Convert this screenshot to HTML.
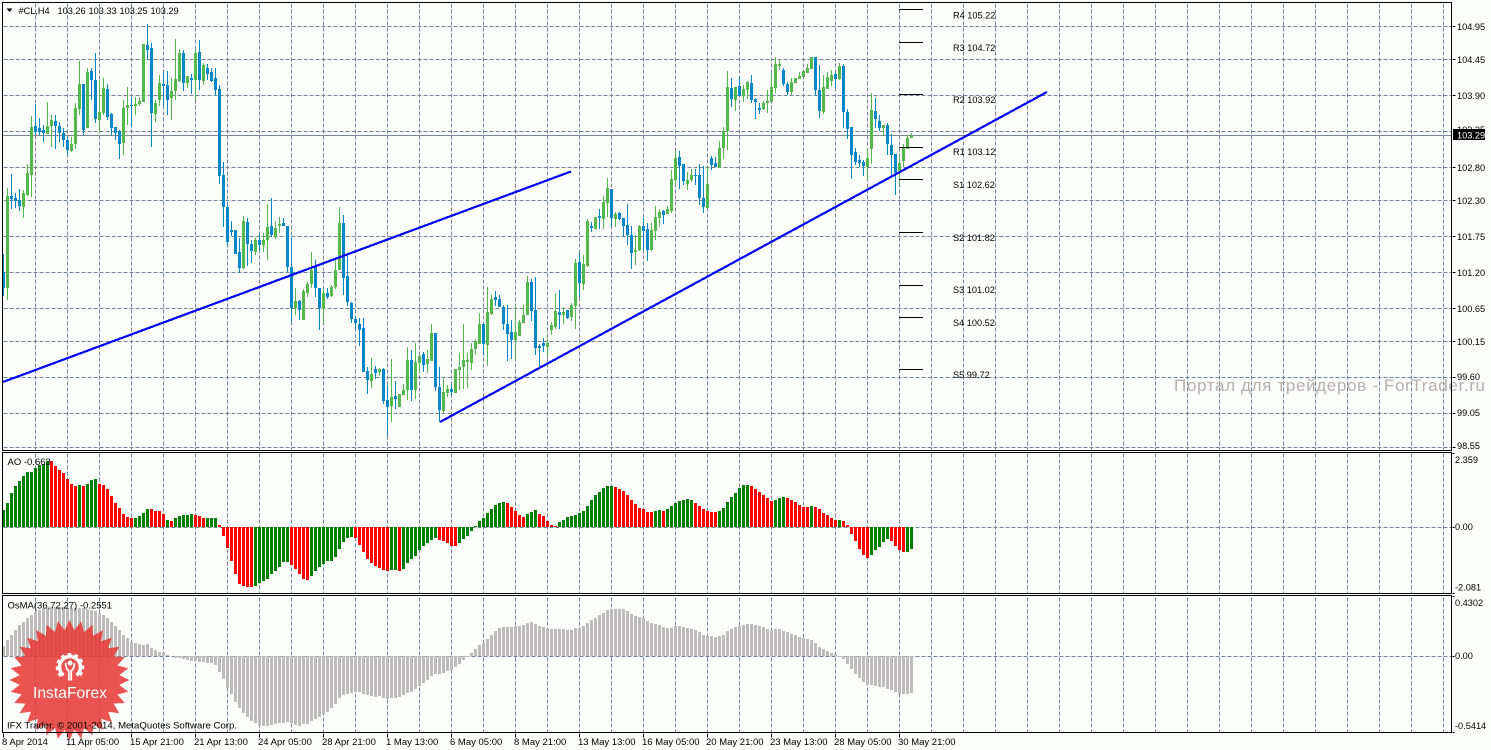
<!DOCTYPE html>
<html lang="en">
<head>
<meta charset="utf-8">
<title>#CL,H4</title>
<style>
html,body{margin:0;padding:0;background:#fcfefc;width:1491px;height:750px;overflow:hidden}
svg{display:block;position:absolute;left:0;top:0}
text{font-family:"Liberation Sans",Arial,sans-serif;font-size:9.5px;fill:#000}
.p text{font-size:9.2px}
</style>
</head>
<body>
<svg width="1491" height="750" viewBox="0 0 1491 750" xmlns="http://www.w3.org/2000/svg">
<rect width="1491" height="750" fill="#fcfefc"/>

<!-- grid -->
<g transform="translate(.5,.5)" shape-rendering="crispEdges" fill="none" stroke="#718399" stroke-width="1" stroke-dasharray="4 2">
<path d="M35 3V732M67 3V732M99 3V732M131 3V732M163 3V732M195 3V732M227 3V732M259 3V732M291 3V732M323 3V732M355 3V732M387 3V732M419 3V732M451 3V732M483 3V732M515 3V732M547 3V732M579 3V732M611 3V732M643 3V732M675 3V732M707 3V732M739 3V732M771 3V732M803 3V732M835 3V732M867 3V732M899 3V732M931 3V732M963 3V732M995 3V732M1027 3V732M1059 3V732M1091 3V732M1123 3V732M1155 3V732M1187 3V732M1219 3V732M1251 3V732M1283 3V732M1315 3V732M1347 3V732M1379 3V732M1411 3V732M1443 3V732"/>
<path d="M3 26H1451M3 59H1451M3 95H1451M3 131H1451M3 167H1451M3 200H1451M3 236H1451M3 272H1451M3 308H1451M3 341H1451M3 377H1451M3 413H1451M3 447H1451M3 527H1451M3 656H1451"/>
</g>
<rect x="0" y="451" width="1451" height="1" fill="#fcfefc"/>
<rect x="0" y="594" width="1451" height="1" fill="#fcfefc"/>
<!-- bid line -->
<rect x="3" y="135" width="1448" height="1" fill="#778899"/>

<!-- candles -->
<g transform="translate(.5,0)" shape-rendering="crispEdges" fill="none">
<path stroke="#0387c9" stroke-width="1" d="M3 254V296M11 174V209M15 193V208M19 189V211M35 104V135M39 118V135M43 125V142M55 115V149M59 122V142M63 128V147M67 136V155M83 84V135M91 68V100M95 53V123M107 84V120M111 113V135M115 127V140M119 130V159M131 97V127M147 24V60M151 43V147M163 72V106M167 71V115M183 50V91M191 74V94M199 40V90M207 64V80M211 68V82M215 68V95M219 85V184M223 162V227M227 205V245M231 221V236M235 230V254M239 238V273M247 218V266M251 240V263M259 235V250M271 198V237M283 218V226M287 226V272M291 237V322M299 300V320M315 260V297M319 288V330M327 288V299M343 215V295M347 254V306M351 302V323M355 317V330M359 318V346M363 318V372M367 367V394M375 366V379M383 368V404M387 386V436M395 381V409M411 350V401M423 352V372M435 333V391M439 367V422M451 385V396M483 324V355M495 291V306M499 295V307M503 305V330M507 305V361M511 320V359M531 279V321M535 277V355M539 344V367M543 338V352M559 290V329M567 310V319M579 252V297M591 222V232M599 209V229M611 189V227M619 212V220M623 218V237M627 204V245M631 226V269M643 218V250M647 223V261M663 210V224M679 151V189M683 164V185M695 169V185M699 164V205M703 166V213M711 156V170M715 157V167M731 78V107M739 77V96M751 75V103M755 98V119M759 103V114M783 68V86M787 82V95M815 57V95M819 65V118M835 73V88M843 64V128M847 109V139M851 127V179M855 148V165M859 155V167M863 160V176M875 98V128M879 115V131M887 123V155M891 134V176M895 154V195"/>
<path stroke="#0387c9" stroke-width="3" d="M3 272V288M11 196V199M15 198V201M19 200V206M35 126V132M39 128V132M43 130V133M55 121V126M59 126V133M63 133V140M67 140V150M83 84V130M91 71V80M95 80V119M107 89V117M111 114V128M115 127V133M119 131V144M131 105V106M147 45V50M151 48V113M163 84V86M167 85V100M183 53V83M191 78V80M199 52V80M207 68V74M211 72V81M215 78V90M219 89V176M223 175V207M227 207V242M231 230V232M235 230V254M239 252V268M247 222V244M251 244V251M259 240V245M271 226V235M283 223V226M287 226V267M291 267V308M299 301V310M315 267V288M319 288V308M327 293V297M343 223V278M347 276V302M351 303V319M355 319V323M359 324V330M363 328V372M367 371V380M375 369V373M383 369V401M387 400V407M395 396V399M411 360V390M423 354V365M435 333V387M439 387V410M451 389V392M483 324V344M495 297V300M499 299V307M503 307V324M507 324V334M511 332V340M531 282V311M535 310V348M539 346V348M543 343V346M559 312V315M567 310V318M579 262V283M591 226V228M599 216V218M611 189V218M619 213V219M623 218V226M627 225V235M631 235V253M643 226V231M647 229V250M663 211V215M679 157V166M683 164V181M695 175V176M699 175V198M703 198V207M711 158V165M715 163V167M731 88V99M739 86V96M751 83V100M755 99V102M759 108V110M783 70V84M787 84V92M815 57V90M819 90V111M835 74V79M843 66V112M847 112V129M851 127V155M855 152V162M859 160V163M863 162V166M875 111V119M879 121V128M887 125V144M891 145V155M895 154V173"/>
<path stroke="#55b84c" stroke-width="1" d="M7 188V300M23 190V218M27 164V196M31 116V197M47 102V134M51 115V147M71 137V152M75 103V149M79 61V115M87 68V128M99 80V133M103 78V115M123 100V155M127 87V125M135 97V115M139 97V106M143 44V102M155 100V122M159 75V106M171 78V120M175 39V100M179 49V82M187 76V88M195 49V100M203 63V85M243 216V269M255 238V255M263 233V252M267 204V260M275 221V239M279 217V233M295 288V315M303 289V320M307 282V297M311 252V288M323 289V323M331 285V297M335 260V289M339 207V270M371 358V388M379 368V376M391 359V422M399 394V407M403 384V395M407 347V400M415 343V399M419 354V371M427 350V373M431 324V361M443 377V413M447 385V397M455 369V393M459 353V390M463 324V389M467 353V388M471 343V370M475 339V355M479 313V344M487 287V366M491 295V315M515 305V359M519 320V336M523 305V323M527 276V315M547 338V357M551 322V335M555 293V329M563 307V324M571 303V321M575 259V329M583 255V290M587 219V267M595 217V229M603 196V229M607 178V217M615 212V227M635 235V265M639 225V251M651 223V251M655 206V240M659 209V227M667 206V214M671 170V213M675 150V185M687 172V190M691 169V182M707 167V208M719 141V168M723 127V159M727 71V150M735 87V111M743 85V102M747 81V99M763 101V110M767 90V113M771 74V102M775 57V93M779 60V70M791 78V95M795 78V83M799 72V79M803 70V77M807 64V73M811 57V69M823 75V114M827 72V89M831 70V86M839 63V80M867 148V181M871 93V164M883 125V135M899 158V185M903 144V167M907 135V149M911 133V138"/>
<path stroke="#55b84c" stroke-width="3" d="M7 196V288M23 193V207M27 173V195M31 127V175M47 126V134M51 120V126M71 144V151M75 108V144M79 84V109M87 72V128M99 112V120M103 88V113M123 108V143M127 105V108M135 104V106M139 101V104M143 44V102M155 103V114M159 83V100M171 91V98M175 79V91M179 53V81M187 76V83M195 53V80M203 65V81M243 221V268M255 240V252M263 240V245M267 227V240M275 228V237M279 224V226M295 301V308M303 291V320M307 284V293M311 270V284M323 293V309M331 287V296M335 270V287M339 223V270M371 374V381M379 369V372M391 397V406M399 394V407M403 390V395M407 360V390M415 362V390M419 356V363M427 359V364M431 333V361M443 392V411M447 389V393M455 369V393M459 367V370M463 360V367M467 360V362M471 349V363M475 341V349M479 324V344M487 312V345M491 299V314M515 332V340M519 322V336M523 315V323M527 282V315M547 343V347M551 325V330M555 311V327M563 312V315M571 305V317M575 263V306M583 264V284M587 221V266M595 217V229M603 202V219M607 188V203M615 214V219M635 250V252M639 226V250M651 230V250M655 217V231M659 212V218M667 209V214M671 179V211M675 158V180M687 180V184M691 175V180M707 184V208M719 148V168M723 131V148M727 87V131M735 87V100M743 89V96M747 82V90M763 103V109M767 101V103M771 87V102M775 64V88M779 64V66M791 82V92M795 78V83M799 76V79M803 71V77M807 68V73M811 57V69M823 87V112M827 77V89M831 75V81M839 66V79M867 158V167M871 110V149M883 125V128M899 163V171M903 148V161M907 138V149M911 136V138"/>
</g>

<!-- trend lines -->
<g shape-rendering="crispEdges" stroke="#0000ff" stroke-width="2.2" fill="none">
<path d="M3 382L571 171.500"/>
<path d="M440 422L1047 92"/>
</g>

<!-- pivots -->
<path shape-rendering="crispEdges" stroke="#000" stroke-width="1" fill="none" transform="translate(0,.5)" d="M899 9H923M899 42H923M899 94H923M899 147H923M899 179H923M899 232H923M899 285H923M899 317H923M899 369H923"/>
<g class="p">
<text x="953" y="18.500">R4 105.22</text>
<text x="953" y="51">R3 104.72</text>
<text x="953" y="103">R2 103.92</text>
<text x="953" y="155">R1 103.12</text>
<text x="953" y="188">S1 102.62</text>
<text x="953" y="241">S2 101.82</text>
<text x="953" y="293">S3 101.02</text>
<text x="953" y="326">S4 100.52</text>
<text x="953" y="378">S5 99.72</text>
</g>

<!-- watermark -->
<text x="1174" y="391" textLength="311" lengthAdjust="spacing" style="font-size:17px;fill:#b7aeab">Портал для трейдеров - ForTrader.ru</text>

<!-- AO -->
<g transform="translate(.5,0)" shape-rendering="crispEdges" fill="none" stroke-width="3">
<path stroke="#008000" d="M3 510V527M7 503V527M11 493V527M15 486V527M19 481V527M23 476V527M27 472V527M31 472V527M35 468V527M39 465V527M43 464V527M47 461V527M79 485V527M87 484V527M91 480V527M95 479V527M135 518V527M139 516V527M143 513V527M147 509V527M167 520V527M175 518V527M179 516V527M183 515V527M187 515V527M191 514V527M207 518V527M211 518V527M215 518V527M255 527V586M259 527V583M263 527V581M267 527V579M271 527V574M275 527V571M279 527V567M283 527V562M287 527V562M311 527V576M315 527V571M319 527V567M323 527V564M327 527V561M331 527V561M335 527V557M339 527V549M343 527V542M347 527V538M351 527V537M391 527V570M395 527V570M403 527V569M407 527V563M411 527V559M415 527V556M419 527V550M423 527V546M427 527V543M431 527V540M435 527V538M459 527V543M463 527V539M467 527V536M471 527V531M475 526V527M479 521V527M483 518V527M487 513V527M491 509V527M495 505V527M499 503V527M503 502V527M527 514V527M531 512V527M535 510V527M559 522V527M563 520V527M567 517V527M571 516V527M575 515V527M579 513V527M583 511V527M587 506V527M591 500V527M595 495V527M599 492V527M603 488V527M607 486V527M611 486V527M655 511V527M659 510V527M667 509V527M671 506V527M675 503V527M679 501V527M683 500V527M687 499V527M691 500V527M719 511V527M723 508V527M727 502V527M731 497V527M735 493V527M739 488V527M743 485V527M747 485V527M775 500V527M779 498V527M783 497V527M811 506V527M839 520V527M871 527V555M875 527V550M879 527V547M883 527V542M887 527V539M907 527V552M911 527V549"/>
<path stroke="#ff0000" d="M51 461V527M55 466V527M59 470V527M63 473V527M67 479V527M71 484V527M75 486V527M83 486V527M99 484V527M103 485V527M107 489V527M111 496V527M115 503V527M119 508V527M123 514V527M127 517V527M131 518V527M151 509V527M155 511V527M159 511V527M163 514V527M171 521V527M195 515V527M199 516V527M203 518V527M219 525V527M223 527V536M227 527V548M231 527V561M235 527V574M239 527V584M243 527V586M247 527V587M251 527V587M291 527V565M295 527V569M299 527V574M303 527V579M307 527V580M355 527V538M359 527V545M363 527V552M367 527V559M371 527V563M375 527V566M379 527V568M383 527V570M387 527V571M399 527V571M439 527V540M443 527V541M447 527V543M451 527V546M455 527V546M507 503V527M511 507V527M515 511V527M519 515V527M523 517V527M539 514V527M543 516V527M547 521V527M551 525V527M555 526V527M615 487V527M619 489V527M623 491V527M627 495V527M631 500V527M635 504V527M639 508V527M643 509V527M647 512V527M651 512V527M663 511V527M695 503V527M699 506V527M703 509V527M707 511V527M711 512V527M715 512V527M751 486V527M755 489V527M759 492V527M763 495V527M767 498V527M771 501V527M787 498V527M791 500V527M795 502V527M799 505V527M803 507V527M807 507V527M815 507V527M819 509V527M823 513V527M827 515V527M831 518V527M835 520V527M843 521V527M847 525V527M851 527V534M855 527V541M859 527V549M863 527V555M867 527V558M891 527V541M895 527V546M899 527V550M903 527V552"/>
</g>

<!-- OsMA -->
<path transform="translate(.5,0)" shape-rendering="crispEdges" fill="none" stroke="#bdbbbb" stroke-width="3" d="M3 646V656M7 640V656M11 635V656M15 630V656M19 625V656M23 622V656M27 618V656M31 615V656M35 612V656M39 610V656M43 608V656M47 608V656M51 607V656M55 607V656M59 607V656M63 607V656M67 608V656M71 608V656M75 608V656M79 608V656M83 608V656M87 609V656M91 610V656M95 611V656M99 613V656M103 615V656M107 618V656M111 622V656M115 626V656M119 630V656M123 635V656M127 638V656M131 642V656M135 643V656M139 644V656M143 645V656M147 644V656M151 648V656M155 650V656M159 652V656M163 653V656M167 655V656M175 656V658M179 656V658M183 656V659M187 656V660M191 656V661M195 656V661M199 656V662M203 656V662M207 656V663M211 656V663M215 656V665M219 656V672M223 656V679M227 656V688M231 656V694M235 656V702M239 656V708M243 656V713M247 656V717M251 656V721M255 656V723M259 656V725M263 656V726M267 656V726M271 656V725M275 656V724M279 656V723M283 656V723M287 656V722M291 656V723M295 656V725M299 656V726M303 656V724M307 656V724M311 656V721M315 656V719M319 656V717M323 656V714M327 656V712M331 656V708M335 656V704M339 656V698M343 656V695M347 656V694M351 656V693M355 656V692M359 656V692M363 656V694M367 656V695M371 656V696M375 656V697M379 656V696M383 656V698M387 656V699M391 656V698M395 656V698M399 656V697M403 656V695M407 656V693M411 656V692M415 656V689M419 656V686M423 656V683M427 656V680M431 656V676M435 656V674M439 656V674M443 656V673M447 656V671M451 656V670M455 656V667M459 656V664M463 656V660M467 656V657M471 653V656M475 649V656M479 645V656M483 643V656M487 639V656M491 635V656M495 631V656M499 628V656M503 627V656M507 627V656M511 627V656M515 626V656M519 626V656M523 625V656M527 623V656M531 622V656M535 624V656M539 626V656M543 627V656M547 629V656M551 629V656M555 629V656M559 629V656M563 629V656M567 630V656M571 630V656M575 628V656M579 628V656M583 626V656M587 623V656M591 620V656M595 618V656M599 615V656M603 613V656M607 610V656M611 609V656M615 609V656M619 609V656M623 609V656M627 611V656M631 614V656M635 616V656M639 617V656M643 618V656M647 621V656M651 623V656M655 624V656M659 625V656M663 627V656M667 628V656M671 628V656M675 626V656M679 626V656M683 627V656M687 628V656M691 629V656M695 630V656M699 632V656M703 635V656M707 636V656M711 636V656M715 637V656M719 636V656M723 635V656M727 631V656M731 629V656M735 627V656M739 626V656M743 625V656M747 624V656M751 624V656M755 625V656M759 626V656M763 627V656M767 629V656M771 630V656M775 629V656M779 629V656M783 631V656M787 632V656M791 634V656M795 635V656M799 637V656M803 638V656M807 639V656M811 640V656M815 643V656M819 647V656M823 649V656M827 651V656M831 653V656M835 654V656M839 656V657M843 656V659M847 656V664M851 656V669M855 656V674M859 656V678M863 656V682M867 656V685M871 656V685M875 656V686M879 656V687M883 656V687M887 656V689M891 656V690M895 656V692M899 656V694M903 656V694M907 656V694M911 656V693"/>

<!-- InstaForex badge -->
<polygon transform="translate(69.500,680)" fill="#e63a36" fill-opacity=".87" points="60,0 49.8,4.9 58.8,11.7 47.8,14.5 55.4,23 44.1,23.6 49.9,33.3 38.7,31.7 42.4,42.4 31.7,38.7 33.3,49.9 23.6,44.1 23,55.4 14.5,47.8 11.7,58.8 4.9,49.8 0,60 -4.9,49.8 -11.7,58.8 -14.5,47.8 -23,55.4 -23.6,44.1 -33.3,49.9 -31.7,38.7 -42.4,42.4 -38.7,31.7 -49.9,33.3 -44.1,23.6 -55.4,23 -47.8,14.5 -58.8,11.7 -49.8,4.9 -60,0 -49.8,-4.9 -58.8,-11.7 -47.8,-14.5 -55.4,-23 -44.1,-23.6 -49.9,-33.3 -38.7,-31.7 -42.4,-42.4 -31.7,-38.7 -33.3,-49.9 -23.6,-44.1 -23,-55.4 -14.5,-47.8 -11.7,-58.8 -4.9,-49.8 0,-60 4.9,-49.8 11.7,-58.8 14.5,-47.8 23,-55.4 23.6,-44.1 33.3,-49.9 31.7,-38.7 42.4,-42.4 38.7,-31.7 49.9,-33.3 44.1,-23.6 55.4,-23 47.8,-14.500 58.8,-11.7 49.8,-4.9"/>
<g fill="none" stroke="#fff">
<path d="M63.500 675.300A10.500 10.500 0 1 1 76.500 675.300" stroke-width="3.500"/>
<path d="M61 675.800A12.500 12.500 0 1 1 79 675.800" stroke-width="3.500" stroke-dasharray="3.500 3.200"/>
<path d="M65.500 663Q66 669 68.800 671V680.500M74.500 663Q74 669 71.200 671V680.500" stroke-width="1.800"/>
</g>
<circle cx="70" cy="663" r="2.500" fill="#fff"/>
<text x="33" y="698" textLength="74" lengthAdjust="spacingAndGlyphs" style="font-size:16px;fill:#fff">InstaForex</text>

<!-- panel borders -->
<g shape-rendering="crispEdges" fill="#000">
<rect x="2" y="2" width="1450" height="1"/>
<rect x="2" y="450" width="1450" height="1"/>
<rect x="2" y="452" width="1450" height="1"/>
<rect x="2" y="593" width="1450" height="1"/>
<rect x="2" y="595" width="1450" height="1"/>
<rect x="2" y="732" width="1450" height="1"/>
<rect x="2" y="2" width="1" height="449"/>
<rect x="2" y="452" width="1" height="142"/>
<rect x="2" y="595" width="1" height="138"/>
<rect x="1451" y="2" width="1" height="449"/>
<rect x="1451" y="452" width="1" height="142"/>
<rect x="1451" y="595" width="1" height="138"/>
</g>
<!-- ticks -->
<path shape-rendering="crispEdges" stroke="#000" fill="none" transform="translate(.5,.5)" d="M1452 26H1455M1452 59H1455M1452 95H1455M1452 167H1455M1452 200H1455M1452 236H1455M1452 272H1455M1452 308H1455M1452 341H1455M1452 377H1455M1452 413H1455M1452 447H1455M1452 453H1454M1452 527H1454M1452 593H1454M1452 596H1454M1452 656H1454M1452 732H1454M3 733V737M67 733V737M131 733V737M195 733V737M259 733V737M323 733V737M387 733V737M451 733V737M515 733V737M579 733V737M643 733V737M707 733V737M771 733V737M835 733V737M899 733V737"/>

<!-- header -->
<polygon points="6.500,8.500 12.500,8.500 9.500,12" fill="#000"/>
<g class="p">
<text x="18.500" y="14">#CL,H4</text>
<text x="57.500" y="14">103.26</text>
<text x="88.500" y="14">103.33</text>
<text x="119.500" y="14">103.25</text>
<text x="150.500" y="14">103.29</text>
</g>
<text x="7.500" y="465">AO -0.663</text>
<text x="7.500" y="608.500">OsMA(36,72,27) -0.2551</text>
<text x="7" y="728.500" style="font-size:9.6px">IFX Trader, © 2001-2014, MetaQuotes Software Corp.</text>

<!-- price axis -->
<g class="p">
<text x="1457" y="30">104.95</text>
<text x="1457" y="63">104.45</text>
<text x="1457" y="99">103.90</text>
<text x="1457" y="133">103.35</text>
<rect x="1453" y="129" width="32" height="11" fill="#000"/>
<text x="1457" y="138.500" style="fill:#fff">103.29</text>
<text x="1457" y="171">102.80</text>
<text x="1457" y="204">102.30</text>
<text x="1457" y="240">101.75</text>
<text x="1457" y="276">101.20</text>
<text x="1457" y="312">100.65</text>
<text x="1457" y="345">100.15</text>
<text x="1457" y="380">99.60</text>
<text x="1457" y="416">99.05</text>
<text x="1457" y="449">98.55</text>
<text x="1455" y="463">2.359</text>
<text x="1455" y="530">0.00</text>
<text x="1455" y="590.500">-2.081</text>
<text x="1455" y="606">0.4302</text>
<text x="1455" y="659">0.00</text>
<text x="1455" y="729">-0.5414</text>
</g>

<!-- time axis -->
<text x="2" y="745">8 Apr 2014</text>
<text x="66" y="745">11 Apr 05:00</text>
<text x="130" y="745">15 Apr 21:00</text>
<text x="194" y="745">21 Apr 13:00</text>
<text x="258" y="745">24 Apr 05:00</text>
<text x="322" y="745">28 Apr 21:00</text>
<text x="386" y="745">1 May 13:00</text>
<text x="450" y="745">6 May 05:00</text>
<text x="514" y="745">8 May 21:00</text>
<text x="578" y="745">13 May 13:00</text>
<text x="642" y="745">16 May 05:00</text>
<text x="706" y="745">20 May 21:00</text>
<text x="770" y="745">23 May 13:00</text>
<text x="834" y="745">28 May 05:00</text>
<text x="898" y="745">30 May 21:00</text>
</svg>
</body>
</html>
